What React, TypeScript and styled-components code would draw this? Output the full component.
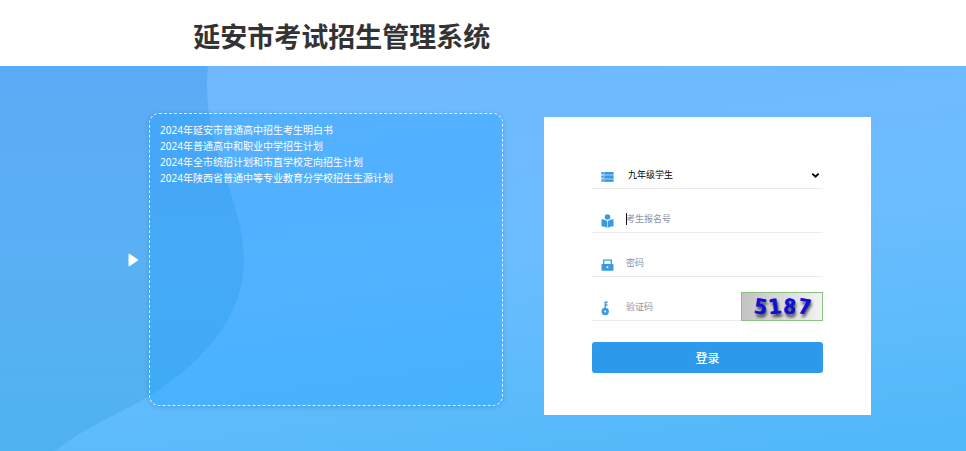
import React from 'react';
import styled, { createGlobalStyle } from 'styled-components';

const GlobalStyle = createGlobalStyle`
  * { box-sizing: border-box; }
  body {
    margin: 0;
    background: #fff;
    font-family: "Noto Sans", "Noto Sans CJK SC", sans-serif;
  }
`;

const Page = styled.div`
  display: flex;
  flex-direction: column;
  min-height: 100vh;
`;

const Header = styled.header`
  display: flex;
  align-items: center;
  height: 66px;
  padding: 6px 20% 0;
`;

const Title = styled.h1`
  margin: 0;
  font-family: "Noto Sans CJK SC", sans-serif;
  font-size: 27px;
  line-height: 40px;
  font-weight: 700;
  color: #333;
  white-space: nowrap;
`;

const Main = styled.main`
  position: relative;
  z-index: 0;
  flex: 1;
  display: grid;
  grid-template-columns: 21px minmax(0, 354fr) 41px minmax(0, 327fr);
  align-items: stretch;
  padding: 47px 95px 36px 128px;
  background: linear-gradient(172deg, #72b7fd 0%, #6bbdff 50%, #4fb9f8 100%);
`;

const Wave = styled.svg`
  position: absolute;
  inset: 0;
  z-index: -1;
  width: 100%;
  height: 100%;
`;

const Arrow = styled.button`
  align-self: center;
  justify-self: start;
  display: flex;
  margin: 0 0 8px;
  padding: 0;
  border: 0;
  background: none;
  cursor: pointer;
`;

const Notices = styled.nav`
  margin-bottom: 9px;
  padding: 8px 10px;
  border: 1px dashed rgba(255, 255, 255, 0.85);
  border-radius: 10px;
  background: rgba(20, 155, 255, 0.3);
  box-shadow: 0 1px 4px rgba(30, 90, 150, 0.3);
`;

const NoticeList = styled.ul`
  margin: 0;
  padding: 0;
  list-style: none;
`;

const NoticeItem = styled.li`
  font-size: 10px;
  line-height: 16px;
`;

const NoticeLink = styled.a`
  color: #fff;
  text-decoration: none;
`;

const LoginCard = styled.form`
  grid-column: 4;
  display: flex;
  flex-direction: column;
  gap: 15px;
  margin-top: 4px;
  padding: 43px 48px 42px;
  background: #fff;
`;

const Field = styled.div`
  display: flex;
  align-items: stretch;
  height: 29px;
  border-bottom: 1px solid #ebebeb;
`;

const FieldLabel = styled.label`
  flex: none;
  display: flex;
  align-items: center;
  width: 32px;
  padding: 5px 0 0 9px;
`;

const TextSlot = styled.div<{ $caret?: boolean }>`
  position: relative;
  flex: 1;
  display: flex;
  min-width: 0;
  padding-left: 2px;

  &::before {
    content: "";
    display: ${(p) => (p.$caret ? 'block' : 'none')};
    position: absolute;
    left: 2px;
    top: 9px;
    width: 1px;
    height: 12px;
    background: #111;
  }
`;

const TextInput = styled.input`
  flex: 1;
  min-width: 0;
  padding: 0;
  border: 0;
  outline: 0;
  background: transparent;
  font-family: "Noto Sans CJK SC", sans-serif;
  font-size: 9px;
  color: #222;

  &::placeholder {
    color: #8d93a3;
    opacity: 1;
  }
`;

const Select = styled.select`
  appearance: none;
  flex: 1;
  min-width: 0;
  padding: 0 16px 0 2px;
  border: 0;
  outline: 0;
  background: transparent;
  font-family: "Noto Sans CJK SC", sans-serif;
  font-size: 9px;
  color: #000;
`;

const Chevron = styled.svg`
  position: absolute;
  right: 3px;
  top: 12px;
  pointer-events: none;
`;

const Captcha = styled.button`
  flex: none;
  display: flex;
  align-items: center;
  justify-content: center;
  gap: 2px;
  width: 82px;
  height: 29px;
  padding: 0;
  border: 1px solid #8cc084;
  background: linear-gradient(90deg, #c3c3c3, #f2f2f2);
  cursor: pointer;
`;

const Digit = styled.span<{ $tilt: number }>`
  font-family: "DejaVu Sans Mono", monospace;
  font-size: 21px;
  line-height: 24px;
  font-weight: 700;
  color: #1111d6;
  text-shadow: 1px 0 0 #1111d6, 2px 3px 3px rgba(0, 0, 0, 0.7);
  transform: rotate(${(p) => p.$tilt}deg);
`;

const Submit = styled.button`
  height: 31px;
  margin-top: 6px;
  padding: 0;
  border: 0;
  border-radius: 3px;
  background: #2c99ea;
  font-family: "Noto Sans CJK SC", sans-serif;
  font-size: 12px;
  font-weight: 500;
  color: #fff;
  cursor: pointer;
`;

const notices = [
  '2024年延安市普通高中招生考生明白书',
  '2024年普通高中和职业中学招生计划',
  '2024年全市统招计划和市直学校定向招生计划',
  '2024年陕西省普通中等专业教育分学校招生生源计划',
];

const captchaDigits = [
  { value: '5', tilt: 8 },
  { value: '1', tilt: -6 },
  { value: '8', tilt: 4 },
  { value: '7', tilt: 8 },
];

const ListIcon = () => (
  <svg width="13" height="12" viewBox="0 0 13 12" fill="#3a9ae0" aria-hidden="true">
    <path d="M0.5 1h2v2h-2zM3.3 1h9.2v2.6H3.3zM0.5 4.8h2v2h-2zM3.3 4.6h9.2v2.8H3.3zM0.5 8.6h2v2h-2zM3.3 8.4h9.2v2.4H3.3z" />
    <path d="M0.5 1h12v9.8h-12z" opacity="0.45" />
  </svg>
);

const ReaderIcon = () => (
  <svg width="13" height="14" viewBox="0 0 13 14" fill="#3a9ae0" aria-hidden="true">
    <circle cx="6.5" cy="3" r="2.8" />
    <path d="M0.5 5.2C3 5.2 5 6 6.2 7.4V13.8C4.8 12.9 3 12.6 0.5 12.6zM12.5 5.2C10 5.2 8 6 6.8 7.4V13.8C8.2 12.9 10 12.6 12.5 12.6z" />
  </svg>
);

const LockIcon = () => (
  <svg width="13" height="12" viewBox="0 0 13 12" aria-hidden="true">
    <path d="M2.7 5.5V1.2h7.6V5.5" fill="none" stroke="#3a9ae0" strokeWidth="1.3" />
    <rect x="0.5" y="5" width="12" height="6.7" rx="0.8" fill="#3a9ae0" />
    <circle cx="6.5" cy="8.2" r="0.9" fill="#fff" />
  </svg>
);

const KeyIcon = () => (
  <svg width="9" height="15" viewBox="0 0 9 15" aria-hidden="true">
    <path d="M4.2 8V0.5M4.2 1.3H6.5M4.2 4H6.5" fill="none" stroke="#3a9ae0" strokeWidth="1.4" />
    <circle cx="4.2" cy="10.5" r="3.7" fill="#3a9ae0" />
    <circle cx="4.2" cy="10.5" r="1" fill="#fff" />
  </svg>
);

export default function App() {
  return (
    <Page>
      <GlobalStyle />
      <Header>
        <Title>延安市考试招生管理系统</Title>
      </Header>
      <Main>
        <Wave viewBox="0 0 966 385" preserveAspectRatio="none" aria-hidden="true">
          <defs>
            <linearGradient id="wave" x1="0" y1="0" x2="0" y2="1">
              <stop offset="0" stopColor="#5aabf5" />
              <stop offset="0.5" stopColor="#5ab0f4" />
              <stop offset="1" stopColor="#4eb2f0" />
            </linearGradient>
          </defs>
          <path
            d="M0 0H208C204 40 212 75 228 118C240 155 244 175 244 196C244 240 215 290 148 331C115 350 85 361 55 385H0Z"
            fill="url(#wave)"
          />
        </Wave>
        <Arrow type="button" aria-label="展开">
          <svg width="11" height="14" viewBox="0 0 11 14" aria-hidden="true">
            <path d="M1 1L10 7L1 13Z" fill="#fff" stroke="#fff" strokeLinejoin="round" />
          </svg>
        </Arrow>
        <Notices>
          <NoticeList>
            {notices.map((text) => (
              <NoticeItem key={text}>
                <NoticeLink href="#">{text}</NoticeLink>
              </NoticeItem>
            ))}
          </NoticeList>
        </Notices>
        <LoginCard onSubmit={(e) => e.preventDefault()}>
          <Field>
            <FieldLabel htmlFor="role" aria-label="用户类型"><ListIcon /></FieldLabel>
            <TextSlot>
              <Select id="role">
                <option>九年级学生</option>
              </Select>
              <Chevron width="9" height="7" viewBox="0 0 9 7" aria-hidden="true">
                <path d="M1.3 1.6L4.5 4.7L7.7 1.6" fill="none" stroke="#000" strokeWidth="1.9" />
              </Chevron>
            </TextSlot>
          </Field>
          <Field>
            <FieldLabel htmlFor="number" aria-label="考生报名号"><ReaderIcon /></FieldLabel>
            <TextSlot $caret>
              <TextInput id="number" type="text" placeholder="考生报名号" />
            </TextSlot>
          </Field>
          <Field>
            <FieldLabel htmlFor="password" aria-label="密码"><LockIcon /></FieldLabel>
            <TextSlot>
              <TextInput id="password" type="password" placeholder="密码" />
            </TextSlot>
          </Field>
          <Field>
            <FieldLabel htmlFor="code" aria-label="验证码"><KeyIcon /></FieldLabel>
            <TextSlot>
              <TextInput id="code" type="text" placeholder="验证码" />
            </TextSlot>
            <Captcha type="button" aria-label="刷新验证码">
              {captchaDigits.map((d) => (
                <Digit key={d.value} $tilt={d.tilt}>{d.value}</Digit>
              ))}
            </Captcha>
          </Field>
          <Submit type="submit">登录</Submit>
        </LoginCard>
      </Main>
    </Page>
  );
}
